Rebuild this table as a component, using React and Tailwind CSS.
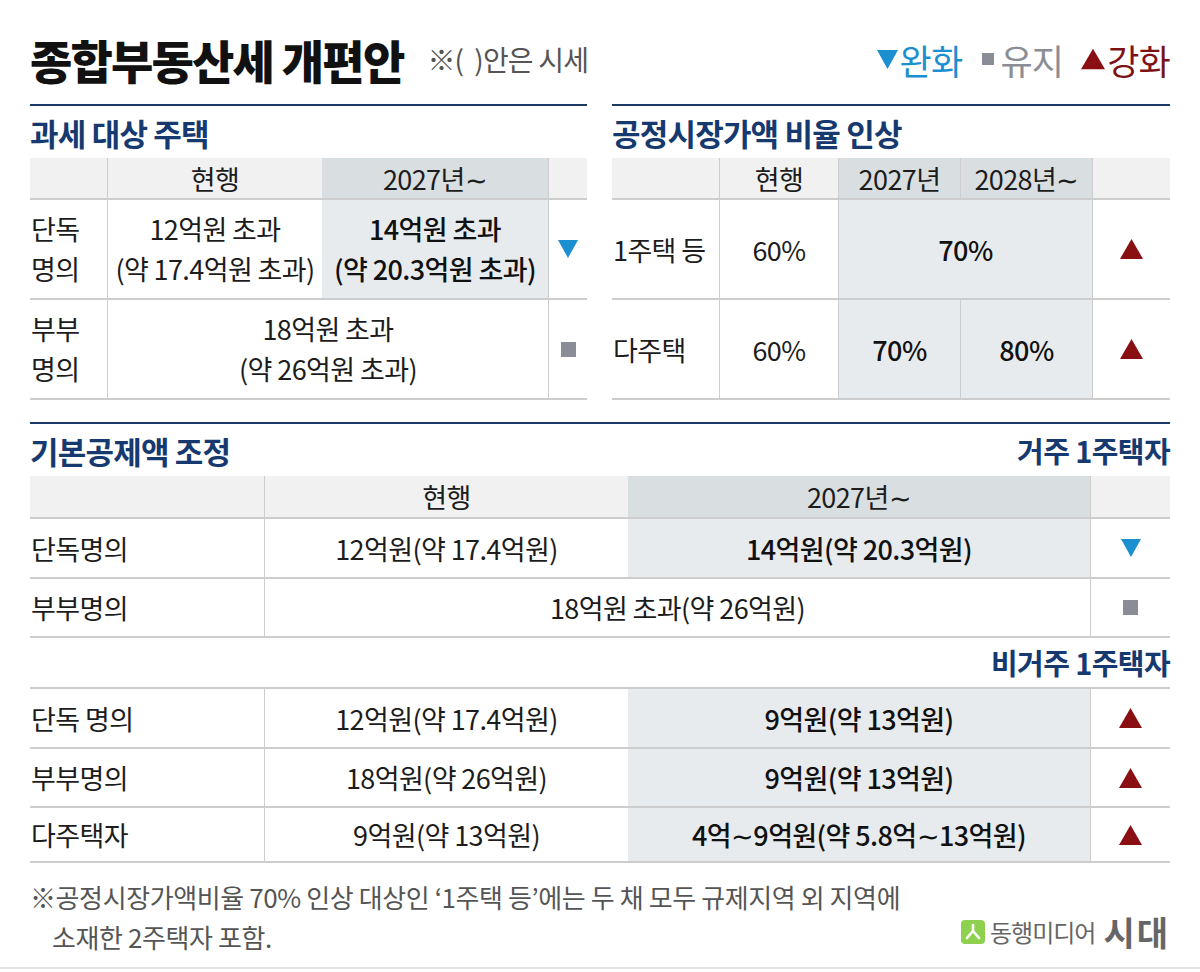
import React from "react";

const F = "font-['Noto_Sans_CJK_KR','Noto_Sans',sans-serif]";

function Down({ w = 20, h = 18 }) {
  return (
    <svg width={w} height={h} viewBox="0 0 20 18" className="shrink-0">
      <path d="M0 0H20L10 18Z" fill="#1b8fd0" />
    </svg>
  );
}
function Up({ w = 23, h = 20 }) {
  return (
    <svg width={w} height={h} viewBox="0 0 22 19" className="shrink-0">
      <path d="M11 0L22 19H0Z" fill="#8a0f12" />
    </svg>
  );
}
function Sq({ s = 15 }) {
  return <div className="bg-[#8a8d96] shrink-0" style={{ width: s, height: s }} />;
}

const B = "border-[#cdcdcd]";
const T = "text-[27px] tracking-[-0.6px]";

function Table1() {
  return (
    <div className={T}>
      <div className={`flex h-[42px] bg-[#f1f1f1] border-b-2 ${B} leading-none`}>
        <div className={`w-[78px] border-r ${B}`} />
        <div className="w-[214px] flex items-center justify-center">현행</div>
        <div className="w-[226px] flex items-center justify-center bg-[#d9dee1]">2027년∼</div>
        <div className={`flex-1 border-l ${B}`} />
      </div>
      <div className={`flex h-[100px] border-b-2 ${B} leading-[40px]`}>
        <div className={`w-[78px] border-r ${B} flex flex-col justify-center pl-[1px]`}>
          <span>단독</span>
          <span>명의</span>
        </div>
        <div className="w-[214px] flex flex-col items-center justify-center whitespace-nowrap">
          <span>12억원 초과</span>
          <span>(약 17.4억원 초과)</span>
        </div>
        <div className="w-[226px] flex flex-col items-center justify-center bg-[#e7ebee] font-medium text-[#111] whitespace-nowrap">
          <span>14억원 초과</span>
          <span>(약 20.3억원 초과)</span>
        </div>
        <div className={`flex-1 border-l ${B} flex items-center justify-center`}>
          <Down />
        </div>
      </div>
      <div className={`flex h-[100px] border-b-2 ${B} leading-[40px]`}>
        <div className={`w-[78px] border-r ${B} flex flex-col justify-center pl-[1px]`}>
          <span>부부</span>
          <span>명의</span>
        </div>
        <div className="w-[440px] flex flex-col items-center justify-center">
          <span>18억원 초과</span>
          <span>(약 26억원 초과)</span>
        </div>
        <div className={`flex-1 border-l ${B} flex items-center justify-center`}>
          <Sq />
        </div>
      </div>
    </div>
  );
}

function Table2() {
  return (
    <div className={T}>
      <div className={`flex h-[42px] bg-[#f1f1f1] border-b-2 ${B} leading-none`}>
        <div className={`w-[108px] border-r ${B}`} />
        <div className="w-[118px] flex items-center justify-center">현행</div>
        <div className={`w-[122px] flex items-center justify-center bg-[#d9dee1] border-l ${B}`}>2027년</div>
        <div className={`w-[132px] flex items-center justify-center bg-[#d9dee1] border-l ${B} whitespace-nowrap`}>2028년∼</div>
        <div className={`flex-1 border-l ${B}`} />
      </div>
      <div className={`flex h-[100px] border-b-2 ${B} leading-none`}>
        <div className={`w-[108px] border-r ${B} flex items-center pl-[1px] whitespace-nowrap`}>1주택 등</div>
        <div className="w-[118px] flex items-center justify-center">60%</div>
        <div className={`w-[254px] flex items-center justify-center bg-[#e7ebee] border-l ${B} font-medium text-[#111]`}>70%</div>
        <div className={`flex-1 border-l ${B} flex items-center justify-center`}>
          <Up />
        </div>
      </div>
      <div className={`flex h-[100px] border-b-2 ${B} leading-none`}>
        <div className={`w-[108px] border-r ${B} flex items-center pl-[1px]`}>다주택</div>
        <div className="w-[118px] flex items-center justify-center">60%</div>
        <div className={`w-[122px] flex items-center justify-center bg-[#e7ebee] border-l ${B} font-medium text-[#111]`}>70%</div>
        <div className={`w-[132px] flex items-center justify-center bg-[#e7ebee] border-l ${B} font-medium text-[#111]`}>80%</div>
        <div className={`flex-1 border-l ${B} flex items-center justify-center`}>
          <Up />
        </div>
      </div>
    </div>
  );
}

function Row3({ h, label, cur, next, icon, merged }) {
  return (
    <div className={`flex border-b-2 ${B} leading-none`} style={{ height: h }}>
      <div className={`w-[235px] border-r ${B} flex items-center pl-[1px]`}>{label}</div>
      {merged ? (
        <div className="w-[825px] flex items-center justify-center">{merged}</div>
      ) : (
        <>
          <div className="w-[363px] flex items-center justify-center">{cur}</div>
          <div className="w-[462px] flex items-center justify-center bg-[#e7ebee] font-medium text-[#111]">{next}</div>
        </>
      )}
      <div className={`flex-1 border-l ${B} flex items-center justify-center`}>{icon}</div>
    </div>
  );
}

const SUB = "text-[29px] font-bold text-[#163a70] tracking-[-0.6px] leading-none";

function Table3() {
  return (
    <div className={T}>
      <div className={`flex h-[43px] bg-[#f1f1f1] border-b-2 ${B} leading-none`}>
        <div className={`w-[235px] border-r ${B}`} />
        <div className="w-[363px] flex items-center justify-center">현행</div>
        <div className="w-[462px] flex items-center justify-center bg-[#d9dee1]">2027년∼</div>
        <div className={`flex-1 border-l ${B}`} />
      </div>
      <Row3 h={60} label="단독명의" cur="12억원(약 17.4억원)" next="14억원(약 20.3억원)" icon={<Down />} />
      <Row3 h={59} label="부부명의" merged="18억원 초과(약 26억원)" icon={<Sq />} />
      <div className={`flex h-[51px] border-b-2 ${B} items-center justify-end`}>
        <span className={SUB}>비거주 1주택자</span>
      </div>
      <Row3 h={60} label="단독 명의" cur="12억원(약 17.4억원)" next="9억원(약 13억원)" icon={<Up />} />
      <Row3 h={59} label="부부명의" cur="18억원(약 26억원)" next="9억원(약 13억원)" icon={<Up />} />
      <Row3 h={55} label="다주택자" cur="9억원(약 13억원)" next="4억∼9억원(약 5.8억∼13억원)" icon={<Up />} />
    </div>
  );
}

function SectionTitle({ children, right }) {
  return (
    <div className="h-[52px] flex items-center justify-between">
      <span className="text-[31px] font-bold text-[#163a70] tracking-[-0.8px] leading-none">{children}</span>
      {right && <span className={SUB}>{right}</span>}
    </div>
  );
}

export default function App() {
  return (
    <div className={`${F} w-[1200px] h-[972px] bg-white text-[#1c1c1c] flex flex-col`}>
      <div className="px-[30px] flex flex-col flex-1">
        <div className="h-[104px] flex items-center pt-[14px]">
          <div className="text-[46px] font-black tracking-[-1.8px] leading-none text-[#111]">종합부동산세 개편안</div>
          <div className="ml-[24px] text-[28px] text-[#555] tracking-[-0.8px] leading-none whitespace-pre">※(  )안은 시세</div>
          <div className="ml-auto flex items-center text-[35px] leading-none tracking-[-0.8px]">
            <span className="flex items-center text-[#1b8fd0] gap-[2px]">
              <Down w={21} h={19} />
              완화
            </span>
            <span className="flex items-center text-[#8a8d96] gap-[6px] ml-[20px]">
              <Sq s={12} />
              유지
            </span>
            <span className="flex items-center text-[#7d1216] gap-[2px] ml-[18px]">
              <Up w={24} h={22} />
              강화
            </span>
          </div>
        </div>

        <div className="flex gap-[25px]">
          <div className="w-[557px] border-t-2 border-[#1d3a66]">
            <SectionTitle>과세 대상 주택</SectionTitle>
            <Table1 />
          </div>
          <div className="flex-1 border-t-2 border-[#1d3a66]">
            <SectionTitle>공정시장가액 비율 인상</SectionTitle>
            <Table2 />
          </div>
        </div>

        <div className="mt-[22px] border-t-2 border-[#1d3a66]">
          <SectionTitle right="거주 1주택자">기본공제액 조정</SectionTitle>
          <Table3 />
        </div>

        <div className="flex items-end justify-between mt-[14px]">
          <div className="text-[26px] text-[#555] tracking-[-0.4px] leading-[40px] whitespace-nowrap">
            <div>※공정시장가액비율 70% 인상 대상인 ‘1주택 등’에는 두 채 모두 규제지역 외 지역에</div>
            <div className="pl-[22px]">소재한 2주택자 포함.</div>
          </div>
          <div className="flex items-center mb-[8px]">
            <svg width="24" height="24" viewBox="0 0 24 24" className="mr-[5px]">
              <rect x="0" y="0" width="24" height="24" rx="4" fill="#8fd14f" />
              <path d="M12 5V11M12 11L6 18M12 11L18 18" stroke="#fff" strokeWidth="2.6" fill="none" strokeLinecap="round" />
            </svg>
            <span className="text-[24px] text-[#666] tracking-[-1px] leading-none">동행미디어</span>
            <span className="text-[34px] font-bold text-[#666] leading-none ml-[8px] tracking-[2px]">시대</span>
          </div>
        </div>
        <div className="flex-1" />
      </div>
      <div className="h-[2px] bg-[#e3e3e3] mb-[3px]" />
    </div>
  );
}
